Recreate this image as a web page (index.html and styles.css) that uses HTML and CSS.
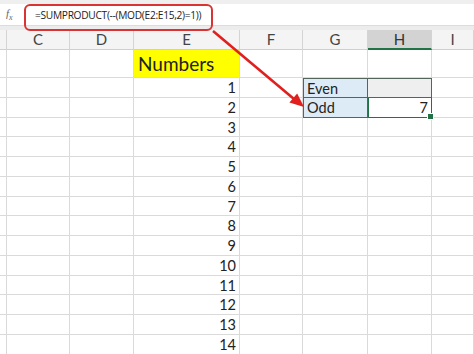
FILE: index.html
```html
<!DOCTYPE html>
<html lang="en">
<head>
    <meta charset="UTF-8">
    <title>Odd count</title>
    <link rel="stylesheet" href="styles.css">
</head>
<body>
    <div class="sheet">
        <!-- formula bar -->
        <div class="formula-bar">
            <span class="fx">f<sub>x</sub></span>
            <span class="formula">=SUMPRODUCT(--(MOD(E2:E15,2)=1))</span>
        </div>
        <div class="gap"></div>
        <!-- grid -->
        <div class="grid">
            <div class="hd"></div><div class="hd">C</div><div class="hd">D</div><div class="hd">E</div><div class="hd">F</div><div class="hd">G</div><div class="hd hd-sel">H</div><div class="hd">I</div>

            <div class="c tall"></div><div class="c tall"></div><div class="c tall"></div><div class="c tall title">Numbers</div><div class="c tall"></div><div class="c tall"></div><div class="c tall"></div><div class="c tall"></div>

            <div class="c"></div><div class="c"></div><div class="c"></div><div class="c num">1</div><div class="c"></div><div class="c label">Even</div><div class="c empty"></div><div class="c"></div>
            <div class="c"></div><div class="c"></div><div class="c"></div><div class="c num">2</div><div class="c"></div><div class="c label label-b">Odd</div><div class="c num active">7</div><div class="c"></div>
            <div class="c"></div><div class="c"></div><div class="c"></div><div class="c num">3</div><div class="c"></div><div class="c"></div><div class="c"></div><div class="c"></div>
            <div class="c"></div><div class="c"></div><div class="c"></div><div class="c num">4</div><div class="c"></div><div class="c"></div><div class="c"></div><div class="c"></div>
            <div class="c"></div><div class="c"></div><div class="c"></div><div class="c num">5</div><div class="c"></div><div class="c"></div><div class="c"></div><div class="c"></div>
            <div class="c"></div><div class="c"></div><div class="c"></div><div class="c num">6</div><div class="c"></div><div class="c"></div><div class="c"></div><div class="c"></div>
            <div class="c"></div><div class="c"></div><div class="c"></div><div class="c num">7</div><div class="c"></div><div class="c"></div><div class="c"></div><div class="c"></div>
            <div class="c"></div><div class="c"></div><div class="c"></div><div class="c num">8</div><div class="c"></div><div class="c"></div><div class="c"></div><div class="c"></div>
            <div class="c"></div><div class="c"></div><div class="c"></div><div class="c num">9</div><div class="c"></div><div class="c"></div><div class="c"></div><div class="c"></div>
            <div class="c"></div><div class="c"></div><div class="c"></div><div class="c num">10</div><div class="c"></div><div class="c"></div><div class="c"></div><div class="c"></div>
            <div class="c"></div><div class="c"></div><div class="c"></div><div class="c num">11</div><div class="c"></div><div class="c"></div><div class="c"></div><div class="c"></div>
            <div class="c"></div><div class="c"></div><div class="c"></div><div class="c num">12</div><div class="c"></div><div class="c"></div><div class="c"></div><div class="c"></div>
            <div class="c"></div><div class="c"></div><div class="c"></div><div class="c num">13</div><div class="c"></div><div class="c"></div><div class="c"></div><div class="c"></div>
            <div class="c"></div><div class="c"></div><div class="c"></div><div class="c num">14</div><div class="c"></div><div class="c"></div><div class="c"></div><div class="c"></div>
        </div>

        <!-- callout -->
        <div class="callout"></div>
        <svg class="arrow" width="474" height="354" viewBox="0 0 474 354">
            <line x1="213" y1="31" x2="294" y2="99" stroke="#e0201f" stroke-width="2.6"/>
            <polygon points="304,107 289.4,102.6 297.2,93.4" fill="#e0201f"/>
        </svg>
    </div>
</body>
</html>
```

FILE: styles.css
```css
*{margin:0;padding:0;box-sizing:border-box;}
body{background:#fff;font-family:Lato,"Open Sans",sans-serif;color:#222;}
.sheet{position:relative;width:474px;height:354px;overflow:hidden;}

.formula-bar{height:25px;border-top:4px solid #efefef;display:flex;align-items:center;background:#fff;}
.fx{width:30px;padding-left:6px;font-family:"Liberation Serif",serif;font-style:italic;font-size:11px;color:#666;}
.fx sub{font-size:8px;}
.formula{font-family:"Open Sans",sans-serif;font-size:10.2px;letter-spacing:-0.3px;color:#222;margin-left:5px;}
.gap{height:5px;background:#ececec;border-top:1px solid #dcdcdc;}

.grid{display:grid;grid-template-columns:7px 63px 64px 106px 63px 65px 64px 42px;grid-template-rows:20px 28px repeat(14,19.75px);}
.hd{background:#f4f4f4;border-right:1px solid #d4d4d4;border-bottom:1px solid #cfcfcf;text-align:center;font-size:15px;line-height:19px;color:#444;}
.hd-sel{background:#d3d3d3;border-bottom:2px solid #217346;color:#333;}

.c{border-right:1px solid #dadada;border-bottom:1px solid #dadada;font-size:14.5px;line-height:20px;padding:0 3px;}
.tall{line-height:27px;}
.title{background:#ffff00;font-size:19px;padding-left:4px;}
.num{text-align:right;}
.label{background:#ddebf7;border:1px solid #56655b;border-top:1px solid #56655b;}
.label-b{border-top:none;}
.empty{background:#efefef;border-top:1px solid #56655b;border-right:1px solid #56655b;border-bottom:1px solid #56655b;}
.active{position:relative;border:1px solid #217346;border-top:none;}
.active::after{content:"";position:absolute;right:-3px;bottom:-3px;width:5px;height:5px;background:#217346;border:1px solid #fff;}

.callout{position:absolute;left:24px;top:4px;width:189px;height:27px;border:2px solid #d93333;border-radius:6px;}
.arrow{position:absolute;left:0;top:0;pointer-events:none;}
```
